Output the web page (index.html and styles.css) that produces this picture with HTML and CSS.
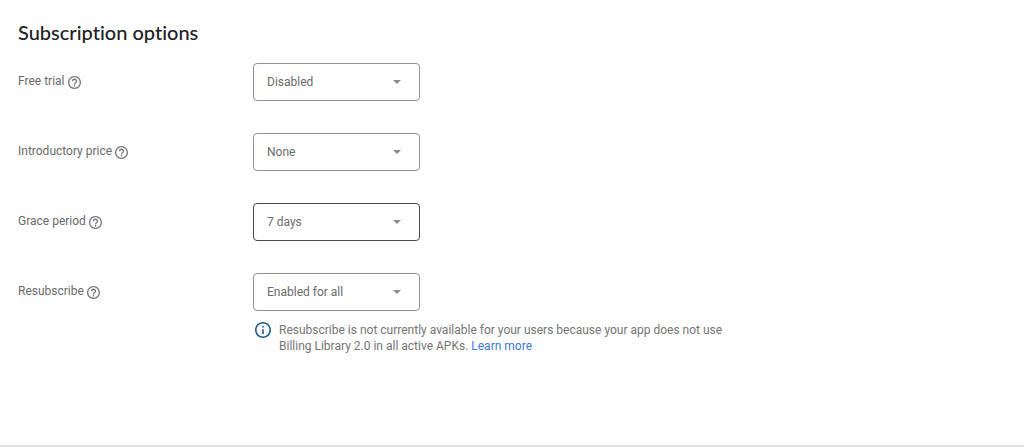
FILE: index.html
```html
<!DOCTYPE html>
<html lang="en">
<head>
  <meta charset="UTF-8" />
  <meta name="viewport" content="width=device-width, initial-scale=1.0"/>
  <title>Subscription options</title>
  <link rel="stylesheet" href="styles.css">
</head>
<body>
  <svg class="sprite" aria-hidden="true">
    <symbol id="help" viewBox="2 2 20 20">
      <path d="M11 18h2v-2h-2v2zm1-16C6.480 2 2 6.480 2 12s4.480 10 10 10 10-4.480 10-10S17.520 2 12 2zm0 18c-4.410 0-8-3.590-8-8s3.590-8 8-8 8 3.590 8 8-3.590 8-8 8zm0-14c-2.210 0-4 1.790-4 4h2c0-1.100.9-2 2-2s2 .9 2 2c0 2-3 1.750-3 5h2c0-2.250 3-2.500 3-5 0-2.210-1.790-4-4-4z"/>
    </symbol>
    <symbol id="arrow" viewBox="0 0 8 4">
      <path d="M0 0h8L4 4z"/>
    </symbol>
  </svg>

  <main class="panel">
    <h1>Subscription options</h1>

    <form class="options">
      <div class="row">
        <div class="name">
          <label for="freeTrial">Free trial</label>
          <svg class="help"><use href="#help"/></svg>
        </div>
        <div class="select">
          <select id="freeTrial">
            <option>Disabled</option>
          </select>
          <svg class="arrow"><use href="#arrow"/></svg>
        </div>
      </div>

      <div class="row">
        <div class="name">
          <label for="introPrice">Introductory price</label>
          <svg class="help"><use href="#help"/></svg>
        </div>
        <div class="select">
          <select id="introPrice">
            <option>None</option>
          </select>
          <svg class="arrow"><use href="#arrow"/></svg>
        </div>
      </div>

      <div class="row">
        <div class="name">
          <label for="gracePeriod">Grace period</label>
          <svg class="help"><use href="#help"/></svg>
        </div>
        <div class="select active">
          <select id="gracePeriod">
            <option>7 days</option>
          </select>
          <svg class="arrow"><use href="#arrow"/></svg>
        </div>
      </div>

      <div class="row">
        <div class="name">
          <label for="resubscribe">Resubscribe</label>
          <svg class="help"><use href="#help"/></svg>
        </div>
        <div class="field">
          <div class="select">
            <select id="resubscribe">
              <option>Enabled for all</option>
            </select>
            <svg class="arrow"><use href="#arrow"/></svg>
          </div>
          <div class="note">
            <svg class="info" viewBox="2 2 20 20">
              <path d="M11 7h2v2h-2zm0 4h2v6h-2zm1-9C6.480 2 2 6.480 2 12s4.480 10 10 10 10-4.480 10-10S17.520 2 12 2zm0 18c-4.410 0-8-3.590-8-8s3.590-8 8-8 8 3.590 8 8-3.590 8-8 8z"/>
            </svg>
            <p>Resubscribe is not currently available for your users because your app does not use<br>
              Billing Library 2.0 in all active APKs. <a href="#">Learn more</a></p>
          </div>
        </div>
      </div>
    </form>
  </main>
</body>
</html>
```

FILE: styles.css
```css
* {
  box-sizing: border-box;
}

body {
  margin: 0;
  font-family: Roboto, Arial, sans-serif;
  font-size: 12px;
  line-height: 16px;
  color: #6a6a6a;
  background-color: #fefefe;
}

.sprite {
  display: none;
}

.panel {
  min-height: 100vh;
  padding: 20px 18px;
  border-bottom: 2px solid #e2e2e2;
}

h1 {
  margin: 0 0 19px;
  font-family: "Google Sans", Lato, sans-serif;
  font-size: 20px;
  font-weight: 500;
  font-variant-ligatures: none;
  line-height: 24px;
  color: #202124;
}

.options {
  display: flex;
  flex-direction: column;
  gap: 32px;
}

.row {
  display: grid;
  grid-template-columns: 235px 1fr;
  align-items: start;
}

.name {
  display: flex;
  align-items: center;
  gap: 3px;
  padding-top: 10px;
}

.help {
  width: 13px;
  height: 13px;
  margin-top: 2px;
  fill: #757575;
}

.select {
  display: grid;
  width: 167px;
  align-items: center;
}

.select select {
  grid-area: 1 / 1;
  height: 38px;
  padding: 0 32px 0 13px;
  appearance: none;
  border: 1px solid #919191;
  border-radius: 4px;
  background-color: #fff;
  font: inherit;
  color: inherit;
}

.select.active select {
  border-color: #4a4a4a;
}

.arrow {
  grid-area: 1 / 1;
  justify-self: end;
  width: 8px;
  height: 4px;
  margin-right: 19px;
  fill: #8a8a8a;
  pointer-events: none;
}

.note {
  display: flex;
  gap: 8px;
  margin-top: 11px;
  padding-left: 2px;
}

.note p {
  margin: 0;
  color: #757575;
}

.info {
  flex: none;
  width: 16px;
  height: 16px;
  fill: #1f5c85;
}

a {
  color: #3c78d0;
  text-decoration: none;
}
```
